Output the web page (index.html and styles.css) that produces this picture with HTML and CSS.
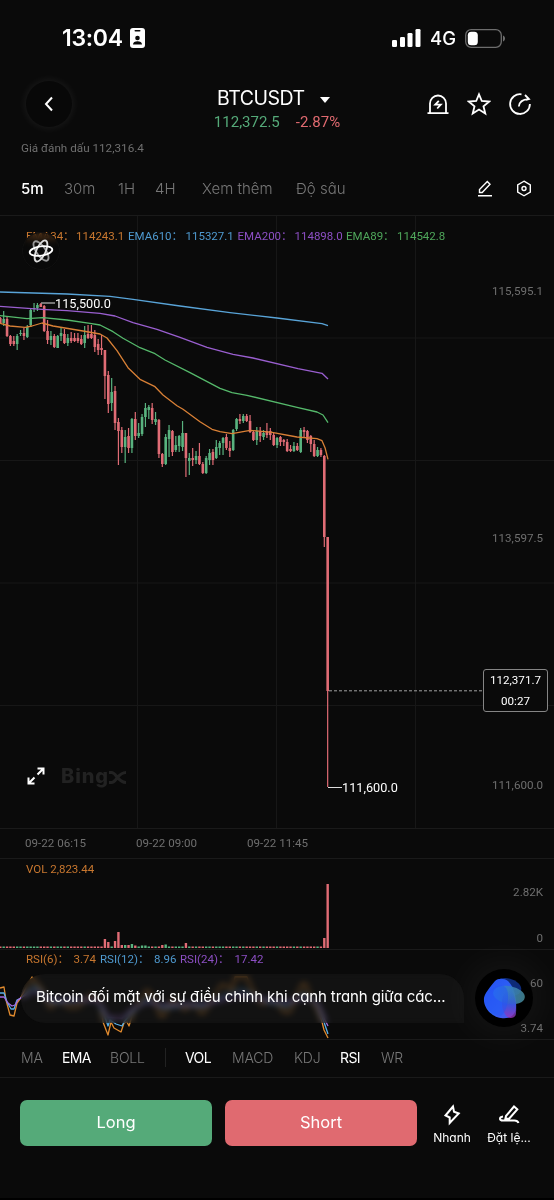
FILE: index.html
```html
<!DOCTYPE html>
<html lang="vi">
	<head>
		<meta charset="UTF-8" />
		<meta name="viewport" content="width=device-width, initial-scale=1.0" />
		<title>BTCUSDT</title>
		<link rel="stylesheet" href="styles.css">
	</head>
	<body>
		<div class="status-bar">
			<div class="status-left">
				<span class="clock">13:04</span>
				<svg class="id-badge" width="15" height="20" viewBox="0 0 15 20">
					<rect width="15" height="20" rx="3" fill="#fff" />
					<rect x="4.5" y="2" width="6" height="1.6" rx=".8" fill="#0a0a0a" />
					<circle cx="7.5" cy="10" r="2.3" fill="#0a0a0a" />
					<path d="M3 16.5c0-2.4 2-3.3 4.5-3.3s4.500 .9 4.500 3.300z" fill="#0a0a0a" />
				</svg>
			</div>
			<div class="status-right">
				<svg width="29" height="18" viewBox="0 0 29 18" fill="#fff">
					<rect x="0" y="11" width="5" height="7" rx="1.300" />
					<rect x="8" y="8" width="5" height="10" rx="1.300" />
					<rect x="15.500" y="4" width="5" height="14" rx="1.300" />
					<rect x="23.500" y="0" width="5" height="18" rx="1.300" />
				</svg>
				<span class="network">4G</span>
				<svg width="41" height="19" viewBox="0 0 41 19">
					<rect x=".7" y=".7" width="35.600" height="17.600" rx="5.500" fill="none" stroke="#6d6d6d" stroke-width="1.300" />
					<rect x="2.800" y="2.800" width="10" height="13.400" rx="3.500" fill="#fff" />
					<path d="M38 6.500c1.300.5 2 1.700 2 3s-.7 2.500-2 3z" fill="#6d6d6d" />
				</svg>
			</div>
		</div>

		<div class="header">
			<button class="back">
				<svg width="10" height="16" viewBox="0 0 10 16"><path d="M8 1.500 2 8l6 6.500" /></svg>
			</button>
			<div class="pair">
				<div class="pair-name">BTCUSDT <span class="caret"></span></div>
				<div class="pair-price"><span class="up">112,372.5</span><span class="down">-2.87%</span></div>
			</div>
			<div class="header-icons">
				<svg width="24" height="24" viewBox="0 0 24 24">
					<path d="M4 21V11.500a8 8 0 0 1 16 0V21M1.500 21.200h21" />
					<path d="m12.800 8.800-3.600 3.800 5.600.1-3.600 3.800" />
				</svg>
				<svg width="24" height="24" viewBox="0 0 24 24">
					<path d="m12 2.300 2.800 6.700 7.300.6-5.600 4.700 1.800 7.200-6.300-3.900-6.300 3.900 1.800-7.200-5.600-4.700 7.300-.6z" />
				</svg>
				<svg width="24" height="24" viewBox="0 0 24 24">
					<path d="M13.500 2.300A9.900 9.900 0 1 0 21.900 12" />
					<path d="M10.800 14.500c.4-4 2.500-6.800 9.700-7.300M17 3l4 4-3 1" />
				</svg>
			</div>
		</div>
		<div class="mark-price">Giá đánh dấu 112,316.4</div>

		<div class="intervals">
			<span class="t-5m active">5m</span>
			<span class="t-30m">30m</span>
			<span class="t-1h">1H</span>
			<span class="t-4h">4H</span>
			<span class="t-more">Xem thêm</span>
			<span class="t-depth">Độ sâu</span>
			<div class="interval-icons">
				<svg width="16" height="17" viewBox="0 0 16 17">
					<path d="M2.500 12.500v-3L10.300 1.500l2.700 2.700-7.800 8.300zM1 15.700h14" />
				</svg>
				<svg width="16" height="17" viewBox="0 0 16 17">
					<path d="m8 1.200 6.300 3.600v7.400L8 15.800l-6.300-3.600V4.800z" />
					<circle cx="8" cy="8.500" r="2" />
				</svg>
			</div>
		</div>

		<!-- all panels share one coordinate space, each one shows its own slice of y -->
		<div class="panel">
			<svg class="plot" width="554" height="613" viewBox="0 215 554 613">
				<path class="grid" d="M0 338h554M0 460.500h554M0 583h554M0 705.500h554M137.500 216v612M276.500 216v612M415.500 216v612" />
				<g class="legend">
					<text class="orange" x="26" y="240">EMA34：</text>
					<text class="orange" x="76" y="240">114243.1</text>
					<text class="blue" x="128" y="240">EMA610：</text>
					<text class="blue" x="185.500" y="240">115327.1</text>
					<text class="purple" x="237.500" y="240">EMA200：</text>
					<text class="purple" x="294.500" y="240">114898.0</text>
					<text class="green" x="346" y="240">EMA89：</text>
					<text class="green" x="397" y="240">114542.8</text>
				</g>
				<g id="candles"></g>
				<g id="emaLines"></g>
				<path class="pointer" d="M41 303h14M328 787.500h14" />
				<text class="extreme" x="55" y="307.500">115,500.0</text>
				<text class="extreme" x="342" y="792">111,600.0</text>
				<path class="last-line" d="M329 690.800h219" />
				<g class="axis">
					<text x="543" y="295">115,595.1</text>
					<text x="543" y="542">113,597.5</text>
					<text x="543" y="789">111,600.0</text>
				</g>
			</svg>
			<div class="ai-button">
				<svg width="26" height="26" viewBox="-13 -13 26 26">
					<ellipse rx="11.400" ry="4.600" transform="rotate(55)" stroke="#999" />
					<ellipse rx="11.400" ry="4.600" transform="rotate(-65)" stroke="#ddd" />
					<ellipse rx="11.400" ry="4.600" transform="rotate(-8)" stroke="#fff" />
				</svg>
			</div>
			<div class="last-price"><span>112,371.7</span><span>00:27</span></div>
			<div class="watermark">
				<svg width="18" height="18" viewBox="0 0 18 18">
					<path d="M10.500 1.500h6v6M16 2l-5.500 5.500M7.500 16.500h-6v-6M2 16l5.500-5.500" />
				</svg>
				<span>Bing<svg width="17" height="13" viewBox="0 0 17 13"><path d="M0 1.500h2.500c5 0 6 10 14.500 10M0 11.500h2.500c5 0 6-10 14.500-10" /></svg></span>
			</div>
		</div>

		<div class="time-axis">
			<span>09-22 06:15</span>
			<span>09-22 09:00</span>
			<span>09-22 11:45</span>
		</div>

		<div class="panel">
			<svg class="plot" width="554" height="90" viewBox="0 859 554 90">
				<text class="legend orange" x="26" y="873">VOL 2,823.44</text>
				<g id="volume"></g>
				<g class="axis">
					<text x="543" y="896">2.82K</text>
					<text x="543" y="942">0</text>
				</g>
			</svg>
		</div>

		<div class="panel">
			<svg class="plot" width="554" height="89" viewBox="0 950 554 89">
				<g class="legend">
					<text class="orange" x="26" y="963">RSI(6)：</text>
					<text class="orange" x="73.500" y="963">3.74</text>
					<text class="blue" x="100" y="963">RSI(12)：</text>
					<text class="blue" x="154" y="963">8.96</text>
					<text class="purple" x="180" y="963">RSI(24)：</text>
					<text class="purple" x="234.500" y="963">17.42</text>
				</g>
				<g id="rsiLines"></g>
			</svg>
			<div class="news">Bitcoin đối mặt với sự điều chỉnh khi cạnh tranh giữa các...</div>
			<div class="assistant">
				<svg width="58" height="58" viewBox="0 0 58 58">
					<defs>
						<linearGradient id="petal" x1="0" y1="0" x2="1" y2="1">
							<stop offset="0" stop-color="#2450f2" />
							<stop offset=".6" stop-color="#2f62f5" />
							<stop offset="1" stop-color="#5a4fe8" />
						</linearGradient>
						<linearGradient id="teal" x1="0" y1="0" x2="1" y2="0">
							<stop offset="0" stop-color="#2a7af0" />
							<stop offset="1" stop-color="#43838e" />
						</linearGradient>
						<linearGradient id="violet" x1="0" y1="0" x2="0" y2="1">
							<stop offset="0" stop-color="#2b62d8" stop-opacity="0" />
							<stop offset=".5" stop-color="#3655dc" />
							<stop offset="1" stop-color="#9a32b8" />
						</linearGradient>
					</defs>
					<ellipse cx="33" cy="18" rx="13.500" ry="8.500" fill="#0d2a78" transform="rotate(14 33 18)" />
					<path d="M20 12c3-3 9-3 13 0 6 6 9 17 8 27-1 9-8 11-15 10C17 48 8 39 9 29c1-5 6-11 11-17z" fill="url(#petal)" />
					<ellipse cx="34" cy="26" rx="16" ry="9" fill="url(#teal)" opacity=".9" transform="rotate(10 34 26)" />
					<path d="M36 21c4 5 6 14 5 23 0 4-3 5-6 5-5-1-9-10-8-18 1-6 4-9 9-10z" fill="url(#violet)" opacity=".8" />
					<path d="M20 18c8-4 13 0 13 9s-3 18-8 20C17 46 9 38 10 29c1-4 5-8 10-11z" fill="#2456f5" opacity=".5" />
				</svg>
			</div>
			<svg class="plot rsi-axis" width="554" height="89" viewBox="0 950 554 89">
				<g class="axis">
					<text x="543" y="987">60</text>
					<text x="543" y="1032">3.74</text>
				</g>
			</svg>
		</div>

		<div class="indicators">
			<span class="i-ma">MA</span>
			<span class="i-ema active">EMA</span>
			<span class="i-boll">BOLL</span>
			<i class="divider"></i>
			<span class="i-vol active">VOL</span>
			<span class="i-macd">MACD</span>
			<span class="i-kdj">KDJ</span>
			<span class="i-rsi active">RSI</span>
			<span>WR</span>
		</div>

		<div class="actions">
			<button class="trade long">Long</button>
			<button class="trade short">Short</button>
			<div class="shortcut quick">
				<svg width="22" height="22" viewBox="0 0 22 22">
					<path d="M12 2.500 4.500 11.500l4.200 2v5.500l9-9.500-4.700-1.700z" />
				</svg>
				<span>Nhanh</span>
			</div>
			<div class="shortcut">
				<svg width="22" height="22" viewBox="0 0 22 22">
					<path d="m8 12 8-9.500 3.300 2.800-8 9.200-4 .5zM5 12.500c-4 .5-4 4 0 4h11.500c2 0 3.300.7 4 2.500" />
				</svg>
				<span>Đặt lệ...</span>
			</div>
		</div>

		<script>
			const STEP = 3.375;
			const UP = "#59b37f";
			const DOWN = "#e06c75";

			// direction, high, body top, body bottom, low
			const candles = `
				d 317 318 323 323|u 311 319 323 326|d 317 319 336 337|d 335 336 344 346
				d 336 341 344 346|u 334 336 344 350|u 330 333 334 336|d 328 333 336 340
				u 325 327 337 338|u 309 310 325 327|u 303 308 309 312|u 303 305 308 311
				d 303 304 307 307|d 305 306 331 332|d 320 331 340 344|u 331 336 340 345
				d 334 336 347 348|u 335 336 348 348|u 328 333 336 341|d 329 334 343 344
				u 334 338 343 346|d 332 338 341 343|d 333 338 341 342|d 333 338 341 343
				d 335 339 344 345|u 326 335 343 348|d 325 334 338 339|d 325 334 338 339
				d 330 335 347 352|d 339 344 350 355|d 335 348 350 355|d 350 350 376 399
				d 371 375 404 413|u 378 392 403 411|d 386 391 423 430|d 418 422 431 465
				d 427 430 447 453|u 430 437 447 463|d 428 436 448 453|u 418 419 448 453
				d 412 419 436 440|u 423 433 436 438|u 414 417 434 436|u 403 408 417 427
				u 405 407 410 419|d 403 408 420 424|u 412 419 422 425|d 419 420 454 458
				d 453 454 464 467|u 434 437 464 465|u 425 430 439 457|d 430 431 452 456
				u 436 445 450 452|u 435 436 446 452|u 421 433 447 451|d 433 433 458 477
				u 453 458 461 475|d 448 458 460 466|u 451 456 460 464|d 443 456 464 465
				d 462 464 473 474|u 456 458 473 474|u 449 453 460 465|d 449 452 460 465
				u 440 447 458 459|u 441 443 448 455|u 437 438 443 455|d 434 437 448 450
				d 441 448 451 457|u 429 430 450 451|u 418 419 429 431|d 414 419 421 424
				u 414 416 421 423|d 414 416 421 422|d 415 421 432 433|d 431 432 440 441
				u 427 431 440 445|d 427 431 436 442|u 430 433 437 440|d 423 431 435 438
				d 428 431 435 440|d 433 435 445 446|u 437 438 445 448|d 436 437 442 446
				d 439 440 442 446|d 439 442 451 452|d 445 449 451 452|u 442 446 451 452
				d 443 446 450 451|u 428 430 452 453|d 427 430 432 437|d 430 431 440 443
				d 435 436 444 452|d 440 444 456 457|u 447 450 456 457|d 448 450 455 457
				d 455 456 537 547|d 537 537 691 787`
				.trim()
				.split(/[|\n]/)
				.map((row) => row.trim().split(" "));

			// only the bars that rise above the floor
			const volumes = {
				31: 9, 32: 6, 34: 7, 35: 16, 36: 3, 37: 3, 38: 3, 39: 4, 40: 2.5,
				42: 2.5, 43: 2.5, 48: 3, 49: 3.5, 55: 5, 96: 10, 97: 64,
			};

			const emas = [
				["#59a4d8", "0 292 67 294 110 296.3 133 299.3 180 306 230 312.7 277 318 322 323.7 328 325.7"],
				["#9a5fd0", "0 306.3 42 309.3 67 310.7 100 313.3 115 316 133 322.7 157 329.3 180 337.3 207 347.3 233 354.3 253 358 298 368.7 322 373.3 328 379"],
				["#55b96b", "0 315.7 27 318.7 43 317.7 67 320 90 323.3 100 325 113 331.7 123 338.3 140 347.7 155 353.7 165 360 190 372.7 220 388.3 232 392.7 247 395.3 297 407.3 317 412 323 415 328 422.7"],
				["#d98036", "0 323.3 10 326 25 327.3 32 326 42 323 53 326 83 331 100 334 107 338 117 350.7 128 367.7 140 379.3 155 386.7 163 395 177 405.7 183 409.3 200 421.7 212 429.3 220 431.7 232 433.7 250 430.3 272 432.3 297 437 317 438.7 322 440.7 325 447.7 328 459.3"],
			];

			const rsis = [
				["#e08a2e", "0 988 4 987 6 1000 10 1015 14 1016 17 1003 20 999 32 977 42 990 50 1008 60 1000 68 1007 78 1007 90 995 100 1000 103 1022 108 1035 111 1022 114 1028 121 1032 124 1023 127 1022 129 1026 134 1010 147 990 155 1000 160 1016 164 1016 172 1000 185 1010 195 1003 200 1013 204 1013 212 1000 221 985 225 985 232 990 235 977 247 977 252 990 262 1004 275 1000 284 1012 290 1012 302 984 306 984 310 998 317 1008 322 1022 324 1030 328 1038"],
				["#59b0e8", "0 993 4 993 7 1002 11 1009 14 1009 17 1000 21 998 35 986 50 1002 75 1001 98 1000 106 1020 108 1026 110 1020 116 1024 122 1026 124 1022 134 1010 148 998 162 1008 185 1005 205 1006 225 995 242 989 262 1000 287 1006 304 994 317 1004 324 1022 328 1034"],
				["#a56ae0", "0 997 4 997 8 1003 12 1006 15 1005 18 1000 22 997 36 991 50 1000 98 1000 108 1017 122 1018 134 1008 148 1002 162 1005 205 1004 242 995 262 999 287 1002 304 998 317 1002 325 1020 328 1026"],
			];

			function candleSvg([dir, high, top, bottom, low], i) {
				const x = 0.3 + i * STEP;
				const color = dir === "u" ? UP : DOWN;
				return `<rect x="${x - 0.6}" y="${high}" width="1.2" height="${low - high}" fill="${color}" />
					<rect x="${x - 1.3}" y="${top}" width="2.6" height="${Math.max(bottom - top, 1)}" fill="${color}" />`;
			}

			function volumeSvg([dir], i) {
				const height = volumes[i] || 1.5;
				const x = 0.3 + i * STEP - 1.2;
				return `<rect x="${x}" y="${948 - height}" width="2.4" height="${height}" fill="${dir === "u" ? UP : DOWN}" />`;
			}

			function lineSvg([color, points]) {
				return `<polyline points="${points}" stroke="${color}" />`;
			}

			document.getElementById("candles").innerHTML = candles.map(candleSvg).join("");
			document.getElementById("volume").innerHTML = candles.map(volumeSvg).join("");
			document.getElementById("emaLines").innerHTML = emas.map(lineSvg).join("");
			document.getElementById("rsiLines").innerHTML = rsis.map(lineSvg).join("");
		</script>
	</body>
</html>
```
FILE: styles.css
```css
:root {
	--bg: #0a0a0a;
	--line: #1a1a1a;
	--muted: #6f6f6f;
	--up: #55aa79;
	--down: #e06a70;
}
* {
	box-sizing: border-box;
}
body {
	margin: 0;
	width: 554px;
	height: 1200px;
	overflow: hidden;
	background: var(--bg);
	color: #fff;
	font-family: Inter, "Liberation Sans", sans-serif;
	font-feature-settings: "cv11";
	border-bottom: 2px solid #000;
}
svg {
	display: block;
	flex: none;
}
button {
	font: inherit;
	font-feature-settings: inherit;
	color: inherit;
	border: none;
	padding: 0;
}
.status-bar {
	height: 76px;
	padding: 0 48px 0 62px;
	display: flex;
	justify-content: space-between;
	align-items: center;
}
.status-left,
.status-right {
	display: flex;
	align-items: center;
}
.clock {
	width: 68px;
	font-size: 23px;
	font-weight: 600;
	letter-spacing: -0.3px;
}
.network {
	width: 35px;
	margin-left: 9px;
	font-size: 18.500px;
	font-weight: 500;
}
.header {
	height: 61px;
	padding: 5px 22px 0 26px;
	display: grid;
	grid-template-columns: 140px 1fr 106px;
}
.back {
	width: 46px;
	height: 46px;
	border-radius: 50%;
	background: #080808;
	box-shadow: 0 0 7px 2px rgba(255, 255, 255, 0.06);
	display: flex;
	align-items: center;
	justify-content: center;
}
.back svg {
	fill: none;
	stroke: #fff;
	stroke-width: 2;
}
.pair {
	width: 222px;
	padding-top: 3px;
}
.pair-name {
	height: 28px;
	padding-left: 51px;
	display: flex;
	align-items: center;
	gap: 15px;
	font-size: 19.500px;
	letter-spacing: -0.5px;
}
.caret {
	border: 5px solid transparent;
	border-top: 6px solid #fff;
	border-bottom: 0;
	margin-top: 3px;
}
.pair-price {
	display: flex;
	justify-content: center;
	gap: 16px;
	font: 15px/21px Roboto, sans-serif;
}
.up {
	color: var(--up);
}
.down {
	color: var(--down);
}
.header-icons {
	padding-top: 11px;
	display: flex;
	justify-content: space-between;
}
.header-icons svg {
	fill: none;
	stroke: #fff;
	stroke-width: 1.8;
}
.mark-price {
	height: 28px;
	padding: 3px 21px 0;
	font: 11.700px/17px Roboto, sans-serif;
	color: var(--muted);
}
.intervals {
	height: 51px;
	padding: 0 22px 3px 21px;
	display: flex;
	align-items: center;
	font-size: 15px;
	font-weight: 300;
	color: #777;
	border-bottom: 1px solid var(--line);
	margin-bottom: -1px;
}
.active {
	color: #fff;
}
.t-5m {
	width: 43px;
	font-weight: 500;
}
.t-30m {
	width: 54px;
}
.t-1h {
	width: 37px;
}
.t-4h {
	width: 47px;
}
.t-more {
	width: 94px;
}
.interval-icons {
	margin-left: auto;
	display: flex;
	gap: 23px;
}
.interval-icons svg {
	fill: none;
	stroke: #fff;
	stroke-width: 1.4;
}
.panel {
	position: relative;
	border-bottom: 1px solid var(--line);
}
.panel + .panel {
	height: 90px;
}
.plot {
	font-family: Roboto, "Noto Sans CJK SC", sans-serif;
	font-size: 12px;
}
.plot polyline {
	fill: none;
	stroke-width: 1.3;
	stroke-linejoin: round;
}
.grid {
	stroke: #171717;
}
.legend {
	font-size: 11.500px;
}
.orange {
	fill: #c8772f;
}
.blue {
	fill: #4f9ad0;
}
.purple {
	fill: #8c4fc4;
}
.green {
	fill: #4fa75b;
}
.axis {
	fill: #6f6f6f;
	text-anchor: end;
	font-size: 11.600px;
}
.extreme {
	fill: #fff;
	font-size: 12.700px;
}
.pointer {
	stroke: #ddd;
}
.last-line {
	stroke: #a0a0a0;
	stroke-dasharray: 3 2;
}
.ai-button {
	position: absolute;
	left: 22px;
	top: 17px;
	width: 38px;
	height: 38px;
	border-radius: 50%;
	background: rgba(10, 10, 10, 0.3);
	backdrop-filter: blur(3px);
	border: 1px solid #101010;
	display: flex;
	align-items: center;
	justify-content: center;
}
.ai-button svg {
	fill: none;
	stroke-width: 1.8;
}
.last-price {
	position: absolute;
	left: 483px;
	top: 454px;
	width: 65px;
	height: 43px;
	border: 1px solid #858585;
	border-radius: 3px;
	background: var(--bg);
	display: flex;
	flex-direction: column;
	align-items: center;
	font: 11.600px/21px Roboto, sans-serif;
}
.watermark {
	position: absolute;
	left: 27px;
	top: 549px;
	display: flex;
	align-items: center;
	gap: 16px;
	font-size: 20px;
	font-weight: 800;
	letter-spacing: 0.9px;
	color: #222;
}
.watermark svg {
	fill: none;
	stroke: #fff;
	stroke-width: 2;
}
.watermark span {
	display: flex;
	align-items: center;
}
.watermark span svg {
	margin-top: 2px;
	stroke: #222;
	stroke-width: 3;
}
.time-axis {
	height: 30px;
	padding: 0 0 1px 25px;
	display: grid;
	grid-template-columns: 111px 111px 111px;
	align-items: center;
	font: 11.600px Roboto, sans-serif;
	color: #6f6f6f;
	border-bottom: 1px solid var(--line);
}
.news {
	position: absolute;
	left: 21px;
	top: 24px;
	width: 443px;
	height: 49px;
	padding-left: 15px;
	border-radius: 24px 24px 0 24px;
	background: rgba(24, 24, 24, 0.5);
	backdrop-filter: blur(3px) brightness(1.2);
	font-size: 15px;
	line-height: 46px;
	letter-spacing: -0.1px;
	white-space: nowrap;
}
.assistant {
	position: absolute;
	left: 475px;
	top: 19px;
	width: 58px;
	height: 58px;
	border-radius: 50%;
	background: #000;
	box-shadow: 0 0 40px 8px rgba(255, 255, 255, 0.05);
}
.rsi-axis {
	position: absolute;
	left: 0;
	top: 0;
}
.indicators {
	height: 38px;
	padding: 0 21px 3px;
	display: flex;
	align-items: center;
	font-size: 14px;
	font-weight: 300;
	letter-spacing: -0.2px;
	color: #777;
	border-bottom: 1px solid var(--line);
}
.indicators .active {
	color: #fff;
	font-weight: 400;
	letter-spacing: -0.6px;
}
.i-ma {
	width: 41px;
}
.i-ema {
	width: 48px;
}
.i-boll {
	width: 55px;
}
.divider {
	width: 1px;
	height: 19px;
	margin-right: 19px;
	background: #222;
}
.i-vol {
	width: 47px;
}
.i-macd {
	width: 62px;
}
.i-kdj {
	width: 46px;
}
.i-rsi {
	width: 41px;
}
.actions {
	padding: 22px 21px 0 20px;
	display: flex;
}
.trade {
	width: 192px;
	height: 46px;
	margin-right: 13px;
	padding-bottom: 2px;
	border-radius: 7px;
	font-size: 16.500px;
}
.long {
	background: var(--up);
}
.short {
	background: var(--down);
}
.shortcut {
	width: 46px;
	padding-top: 4px;
	display: flex;
	flex-direction: column;
	align-items: center;
	gap: 4px;
	font-size: 12px;
	line-height: 16px;
	white-space: nowrap;
}
.quick {
	margin: 0 11px 0 -1px;
}
.shortcut svg {
	fill: none;
	stroke: #fff;
	stroke-width: 2;
}
```
